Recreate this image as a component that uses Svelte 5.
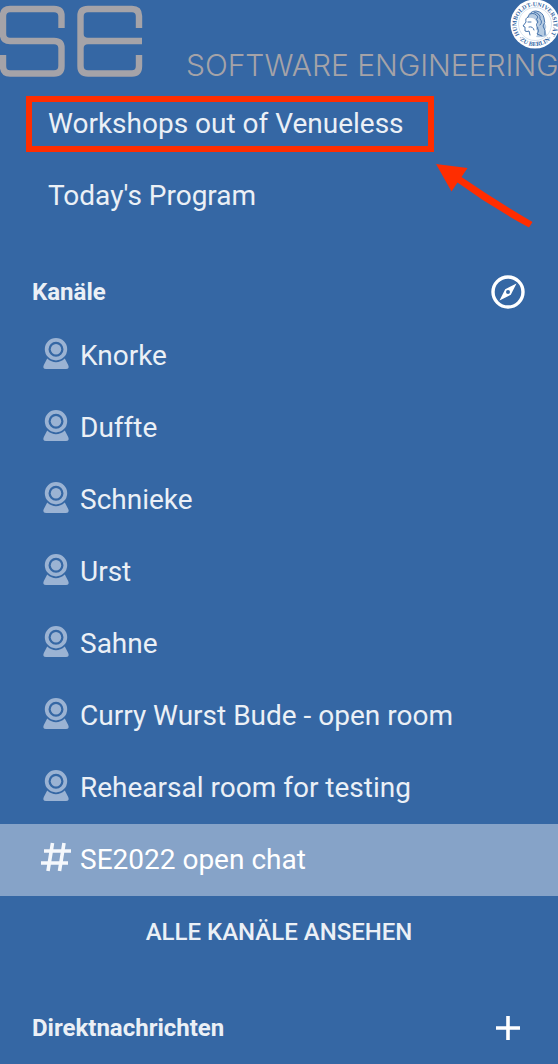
<script>
  const channels = ['Knorke', 'Duffte', 'Schnieke', 'Urst', 'Sahne', 'Curry Wurst Bude - open room', 'Rehearsal room for testing'];
</script>

<aside>
  <header>
    <svg class="logo" viewBox="0 0 144 78" role="img" aria-label="SE">
      <g fill="none" stroke="#a5a3a8" stroke-width="6.400">
        <path d="M61.500 28V16Q61.500 9 54 9H10Q3 9 3 16V34Q3 41 10 41H54Q61.500 41 61.500 48V66Q61.500 73.500 54 73.500H10Q3 73.500 3 66V55" />
        <path d="M139 28V16Q139 9 132 9H88Q80.500 9 80.500 16V66Q80.500 73.500 88 73.500H132Q139 73.500 139 66V55M80.500 34Q80.500 41 88 41H142M80.500 48Q80.500 41 88 41" />
      </g>
    </svg>
    <span class="brand">SOFTWARE ENGINEERING</span>
    <svg class="seal" viewBox="0 0 50 50" role="img" aria-label="Humboldt-Universität zu Berlin">
      <defs>
        <path id="ring-top" d="M10.300 36A18.500 18.500 0 1 1 39.700 36" />
        <path id="ring-bottom" d="M8 38A22 22 0 0 0 42 38" />
      </defs>
      <circle cx="25" cy="24" r="24.500" fill="#fff" />
      <circle cx="25" cy="24" r="16.500" fill="none" stroke="#c9d8ea" stroke-width=".7" />
      <g class="ring">
        <text><textPath href="#ring-top" startOffset="50%" text-anchor="middle">HUMBOLDT-UNIVERSITÄT</textPath></text>
        <text><textPath href="#ring-bottom" startOffset="50%" text-anchor="middle">·ZU BERLIN·</textPath></text>
      </g>
      <path d="M19 15Q25 9 31 13Q35 17 34 23Q38 26 35 30L37 36Q32 38 26 37Q29 32 26 29Q29 25 26 21Q24 17 18 18Z" fill="#b6cbe2" />
      <g fill="none" stroke="#3567a4" stroke-width=".9" stroke-linecap="round">
        <path d="M18 17Q15 18 16 22L13 26L15 27L15 31Q17 32 19 31L20 35" />
        <path d="M18 17Q20 11 26 11Q33 12 34 18Q36 23 33 26Q36 30 35 35M20 14Q25 12 28 17Q25 19 28 22Q25 25 28 28M24 12Q31 14 30 19Q33 22 30 25M27 28Q30 30 27 34L32 36M18 22H21M19 27Q23 26 24 30" />
      </g>
    </svg>
  </header>

  <nav>
    <a href="#workshops" class="page">Workshops out of Venueless
      <svg class="arrow" viewBox="0 0 98 66" aria-hidden="true"><path d="M0 0L31.500 4L25.500 13Q59 36 96.500 58L93 63.500Q55 43 21.500 18.500L15.500 27.500Z" fill="#ff2d00" /></svg>
      <i class="frame"></i>
    </a>
    <a href="#program" class="page">Today's Program</a>

    <div class="heading">
      <h2>Kanäle</h2>
      <button aria-label="Kanäle entdecken">
        <svg viewBox="0 0 40 40"><circle cx="20" cy="20" r="15" fill="none" stroke="#fff" stroke-width="3.400" /><path fill="#fff" fill-rule="evenodd" d="M28.500 11.500L22.800 22.800L11.500 28.500L17.200 17.200ZM20 18A2 2 0 1 0 20 22A2 2 0 1 0 20 18Z" /></svg>
      </button>
    </div>

    {#each channels as name}
      <a href="#channel" class="channel">
        <svg viewBox="0 0 32 36" aria-hidden="true">
          <g fill="#9bb3d3">
            <path fill-rule="evenodd" d="M16 0A11.200 11.200 0 1 0 16 22.400A11.200 11.200 0 1 0 16 0ZM16 3.700A7.500 7.500 0 1 1 16 18.700A7.500 7.500 0 1 1 16 3.700Z" />
            <circle cx="16" cy="11.200" r="5.200" />
            <path d="M7.200 20.500Q16 28 24.800 20.500L28.200 27Q29.800 31 26 31H6Q2.200 31 3.800 27Z" />
          </g>
        </svg>
        {name}
      </a>
    {/each}
    <a href="#chat" class="channel active" aria-current="page">
      <svg viewBox="0 0 32 36" aria-hidden="true"><path d="M12.500 1L8 29M24 1L19.500 29M4 9H31M1 21H28" fill="none" stroke="#f5f8fc" stroke-width="3.600" /></svg>
      SE2022 open chat
    </a>
    <button class="all">ALLE KANÄLE ANSEHEN</button>

    <div class="heading">
      <h2>Direktnachrichten</h2>
      <button aria-label="Neue Direktnachricht">
        <svg viewBox="0 0 40 40"><path d="M20 8V32M8 20H32" stroke="#fff" stroke-width="3.600" /></svg>
      </button>
    </div>
  </nav>
</aside>

<style>
  :global(body) { margin: 0; background: #3567a4; }
  aside { background: #3567a4; color: #ebf0f6; font: 400 28px/36px Roboto, sans-serif; overflow: hidden; }
  header { position: relative; display: flex; align-items: flex-end; height: 88px; gap: 42px; white-space: nowrap; }
  .logo { width: 144px; height: 78px; flex: none; align-self: flex-start; }
  .brand { color: #a5a3a8; font: 300 30px/46px Inter, sans-serif; }
  .seal { position: absolute; top: 0; right: -2px; width: 50px; height: 50px; }
  .ring { font: 700 6px "Liberation Serif", serif; fill: #3567a4; }
  a { color: inherit; text-decoration: none; }
  .page, .channel { display: flex; align-items: center; box-sizing: border-box; height: 72px; padding: 0 48px; }
  .page { position: relative; }
  .frame { position: absolute; left: 26px; top: 8px; width: 408px; height: 56px; box-sizing: border-box; border: 6px solid #ff2d00; }
  .arrow { position: absolute; left: 436px; top: 76px; width: 98px; height: 66px; z-index: 1; }
  .heading { display: flex; align-items: center; justify-content: space-between; height: 56px; padding: 32px 30px 0 32px; }
  h2 { margin: 0; font-size: 24px; line-height: 32px; font-weight: 700; }
  button { border: 0; padding: 0; background: none; color: inherit; font: inherit; cursor: pointer; }
  .heading button, .heading svg { display: block; width: 40px; height: 40px; }
  .channel { gap: 8px; padding: 0 40px; }
  .channel svg { width: 32px; height: 36px; flex: none; }
  .active { background: #86a3c8; color: #fff; }
  .all { display: block; width: 100%; height: 72px; font-size: 24px; font-weight: 500; }
</style>
